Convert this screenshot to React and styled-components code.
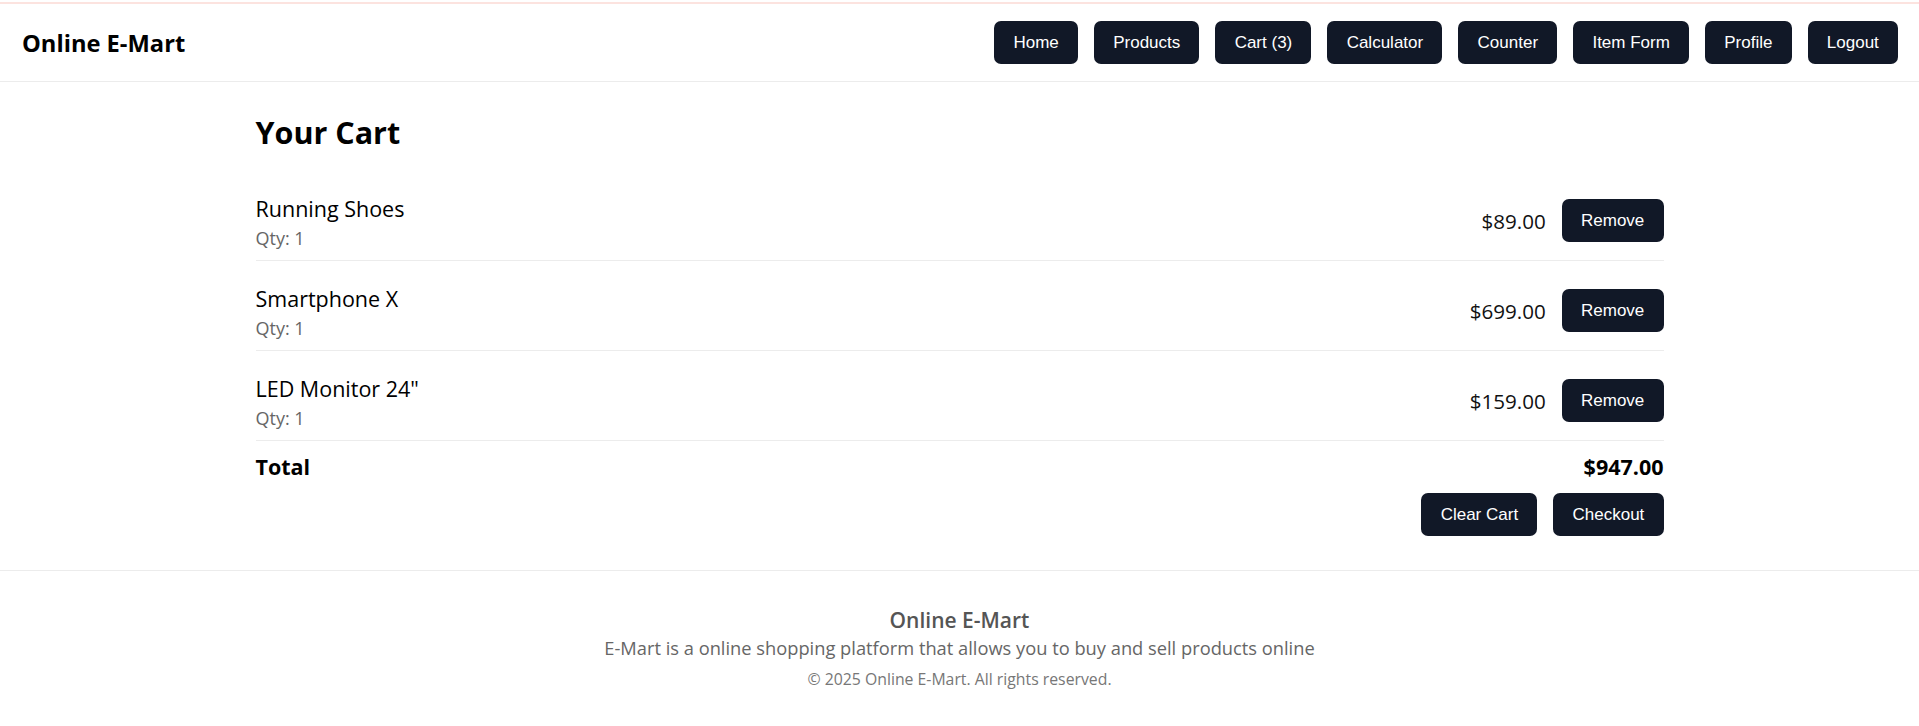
import styled, { createGlobalStyle } from 'styled-components';

const GlobalStyle = createGlobalStyle`
  body {
    margin: 0;
    background: #fff;
    color: #000;
    font-family: "Open Sans", "Noto Sans", sans-serif;
  }
`;

const Header = styled.header`
  margin-top: 2px;
  border-top: 2px solid #fce3df;
  border-bottom: 1px solid #ececec;
  padding: 17px 21px 17px 22px;
  display: flex;
  align-items: center;
  justify-content: space-between;
`;

const Logo = styled.div`
  font-size: 23.7px;
  font-weight: 700;
`;

const Nav = styled.nav`
  display: flex;
  gap: 16px;
`;

const Button = styled.button`
  font-family: "Liberation Sans", Arial, sans-serif;
  font-size: 17px;
  line-height: 24px;
  padding: 9.6px 19.2px;
  border: none;
  border-radius: 7px;
  background: #111827;
  color: #fff;
  cursor: pointer;
`;

const Main = styled.main`
  max-width: 1408px;
  margin: 0 auto;
  padding: 30px 0 34px;
`;

const Title = styled.h1`
  margin: 0 0 39px;
  font-size: 30.5px;
  line-height: 40px;
  font-weight: 700;
`;

const List = styled.div`
  display: flex;
  flex-direction: column;
  gap: 20px;
`;

const Row = styled.div`
  display: flex;
  justify-content: space-between;
  align-items: center;
  padding-bottom: 10px;
  border-bottom: 1px solid #ececec;
`;

const ItemName = styled.div`
  font-size: 21.5px;
  line-height: 35px;
  font-weight: 500;
`;

const Qty = styled.div`
  font-size: 18px;
  line-height: 24px;
  color: #666;
`;

const RightSide = styled.div`
  display: flex;
  align-items: center;
  gap: 16px;
`;

const Price = styled.span`
  font-size: 20.6px;
  color: #111;
`;

const TotalRow = styled.div`
  display: flex;
  justify-content: space-between;
  margin-top: 8px;
  font-size: 21.5px;
  line-height: 35px;
  font-weight: 700;
`;

const Actions = styled.div`
  display: flex;
  justify-content: flex-end;
  gap: 16px;
  margin-top: 9px;
`;

const Footer = styled.footer`
  border-top: 1px solid #ececec;
  padding: 35px 0 40px;
  text-align: center;
`;

const FooterTitle = styled.div`
  font-size: 21px;
  line-height: 28px;
  font-weight: 600;
  color: #555;
`;

const FooterText = styled.div`
  font-size: ${(p) => p.size}px;
  line-height: ${(p) => p.lh}px;
  margin-top: ${(p) => p.mt || 0}px;
  color: ${(p) => p.color};
`;

const links = ['Home', 'Products', 'Cart (3)', 'Calculator', 'Counter', 'Item Form', 'Profile', 'Logout'];

const items = [
  { name: 'Running Shoes', qty: 1, price: 89 },
  { name: 'Smartphone X', qty: 1, price: 699 },
  { name: 'LED Monitor 24"', qty: 1, price: 159 },
];

export default function App() {
  const total = items.reduce((s, i) => s + i.price * i.qty, 0);
  return (
    <>
      <GlobalStyle />
      <Header>
        <Logo>Online E-Mart</Logo>
        <Nav>
          {links.map((l) => (
            <Button key={l}>{l}</Button>
          ))}
        </Nav>
      </Header>
      <Main>
        <Title>Your Cart</Title>
        <List>
          {items.map((item) => (
            <Row key={item.name}>
              <div>
                <ItemName>{item.name}</ItemName>
                <Qty>Qty: {item.qty}</Qty>
              </div>
              <RightSide>
                <Price>${(item.price * item.qty).toFixed(2)}</Price>
                <Button>Remove</Button>
              </RightSide>
            </Row>
          ))}
        </List>
        <TotalRow>
          <span>Total</span>
          <span>${total.toFixed(2)}</span>
        </TotalRow>
        <Actions>
          <Button>Clear Cart</Button>
          <Button>Checkout</Button>
        </Actions>
      </Main>
      <Footer>
        <FooterTitle>Online E-Mart</FooterTitle>
        <FooterText size={18.3} lh={28} color="#666">
          E-Mart is a online shopping platform that allows you to buy and sell products online
        </FooterText>
        <FooterText size={15.8} lh={20} mt={7} color="#777">
          © 2025 Online E-Mart. All rights reserved.
        </FooterText>
      </Footer>
    </>
  );
}
